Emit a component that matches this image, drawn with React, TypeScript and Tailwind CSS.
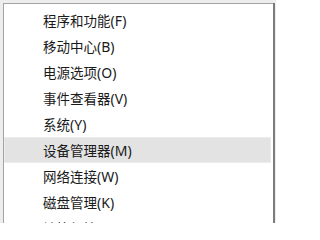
const items = [
  { label: '程序和功能', key: 'F' },
  { label: '移动中心', key: 'B' },
  { label: '电源选项', key: 'O' },
  { label: '事件查看器', key: 'V' },
  { label: '系统', key: 'Y' },
  { label: '设备管理器', key: 'M', active: true },
  { label: '网络连接', key: 'W' },
  { label: '磁盘管理', key: 'K' },
  { label: '计算机管理', key: 'G' },
];

export default function App() {
  return (
    <div className="w-[276px] h-[223px] overflow-hidden bg-[#ededed] pl-[3px] pt-[3px]">
      {/* right edge: darker 2px line */}
      <div className="w-[272px] h-[260px] bg-[#7c7c7c] pr-[2px]">
        {/* top/left hairline */}
        <div className="h-full bg-[#a3a3a3] pl-px pt-px">
          <div className="h-full bg-white pt-[3px] pr-[2px]">
            {items.map((item) => (
              <div
                key={item.key}
                className={
                  'h-[26px] flex items-center pl-[38px] text-[13.5px] text-[#1a1a1a] border ' +
                  (item.active ? 'bg-[#e3e3e3] border-[#ececec]' : 'border-transparent')
                }
                style={{ fontFamily: '"Noto Sans CJK SC", "Noto Sans", sans-serif' }}
              >
                <span>{item.label}</span>
                <span className="font-['Noto_Sans'] text-[14px]">({item.key})</span>
              </div>
            ))}
          </div>
        </div>
      </div>
    </div>
  );
}
